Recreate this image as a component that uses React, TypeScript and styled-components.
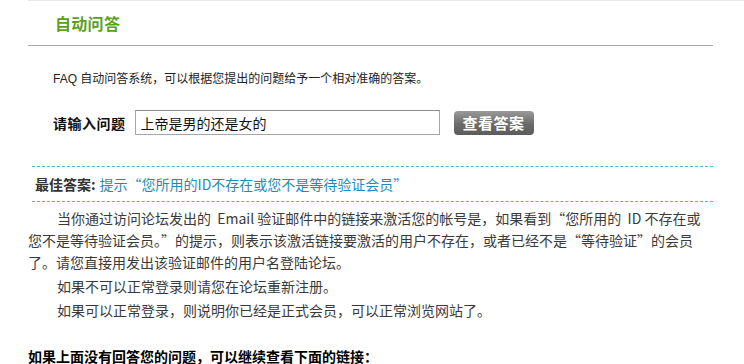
import React, { useState } from "react";
import styled, { createGlobalStyle } from "styled-components";

const GlobalStyle = createGlobalStyle`
  body {
    margin: 0;
    background: #ffffff;
    font-family: "Liberation Sans", "Noto Sans CJK SC", sans-serif;
    color: #333333;
  }
`;

const cjk = `"Noto Sans CJK SC", "Liberation Sans", sans-serif`;

const Page = styled.div`
  padding-left: 28px;
  height: 364px;
  overflow: hidden;
`;

const TopRule = styled.div`
  border-top: 1px solid #e8e8e8;
`;

const Content = styled.div`
  width: 685px;
`;

const Header = styled.div`
  height: 44px;
  border-bottom: 1px solid #a9a9a9;
  padding-left: 27px;
  display: flex;
  align-items: center;
`;

const Title = styled.h2`
  margin: 0;
  font-size: 16px;
  font-weight: bold;
  color: #5aa01c;
  letter-spacing: 0.3px;
`;

const Intro = styled.p`
  margin: 24px 0 0 25px;
  font-size: 12px;
  line-height: 18px;
  color: #222222;
`;

const AskRow = styled.form`
  display: flex;
  align-items: center;
  margin: 22px 0 0 25px;
  height: 25px;
`;

const Label = styled.label`
  font-size: 14px;
  font-weight: bold;
  color: #111111;
  margin-right: 9px;
  letter-spacing: 0.5px;
`;

const Input = styled.input`
  box-sizing: border-box;
  width: 305px;
  height: 25px;
  border: 1px solid #a6a6a6;
  border-top-color: #8a8a8a;
  padding: 0 5px;
  font-family: inherit;
  font-size: 14px;
  color: #111111;
  outline: none;
`;

const Button = styled.button`
  margin-left: 14px;
  width: 80px;
  height: 24px;
  border: none;
  border-radius: 4px;
  background: linear-gradient(#9a9a9a, #6a6a6a 55%, #5c5c5c);
  color: #ffffff;
  font-family: inherit;
  font-size: 15px;
  font-weight: bold;
  letter-spacing: 0.5px;
  cursor: pointer;
`;

const BestAnswer = styled.div`
  margin: 31px 0 0 4px;
  border-top: 1px dashed #45b6d2;
  border-bottom: 1px dashed #45b6d2;
  height: 34px;
  padding-left: 3px;
  display: flex;
  align-items: center;
  font-size: 14px;
  font-family: ${cjk};
`;

const BestLabel = styled.span`
  font-weight: bold;
  color: #333333;
  margin-right: 4px;
`;

const AnswerLink = styled.a`
  color: #1c8cb6;
  text-decoration: none;
`;

const Body = styled.div`
  margin-top: 5px;
  font-family: ${cjk};
`;

const Para = styled.p`
  margin: 2px 0 0;
  font-size: 14px;
  line-height: 22px;
  text-indent: 29px;
  color: #3a3a3a;
  white-space: nowrap;
`;

const MoreTitle = styled.p`
  margin: 25px 0 0;
  font-size: 14px;
  line-height: 20px;
  font-weight: bold;
  color: #000000;
  font-family: ${cjk};
`;

export default function App() {
  const [question, setQuestion] = useState("上帝是男的还是女的");

  return (
    <>
      <GlobalStyle />
      <Page>
        <TopRule />
        <Content>
          <Header>
            <Title>自动问答</Title>
          </Header>
          <Intro>FAQ 自动问答系统，可以根据您提出的问题给予一个相对准确的答案。</Intro>
          <AskRow onSubmit={(e) => e.preventDefault()}>
            <Label htmlFor="q">请输入问题</Label>
            <Input id="q" value={question} onChange={(e) => setQuestion(e.target.value)} />
            <Button type="submit">查看答案</Button>
          </AskRow>
          <BestAnswer>
            <BestLabel>最佳答案:</BestLabel>
            <AnswerLink href="#">提示“您所用的ID不存在或您不是等待验证会员”</AnswerLink>
          </BestAnswer>
          <Body>
            <Para>
              当你通过访问论坛发出的 &nbsp;Email 验证邮件中的链接来激活您的帐号是，如果看到“您所用的 &nbsp;ID 不存在或
              <br />
              您不是等待验证会员。”的提示，则表示该激活链接要激活的用户不存在，或者已经不是“等待验证”的会员
              <br />
              了。请您直接用发出该验证邮件的用户名登陆论坛。
            </Para>
            <Para>如果不可以正常登录则请您在论坛重新注册。</Para>
            <Para>如果可以正常登录，则说明你已经是正式会员，可以正常浏览网站了。</Para>
          </Body>
          <MoreTitle>如果上面没有回答您的问题，可以继续查看下面的链接：</MoreTitle>
        </Content>
      </Page>
    </>
  );
}
